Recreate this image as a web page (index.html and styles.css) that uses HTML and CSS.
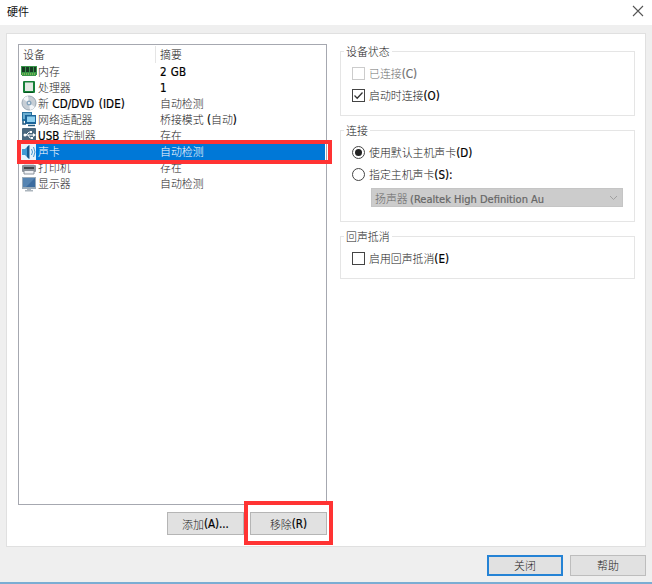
FILE: index.html
```html
<!DOCTYPE html>
<html lang="zh-CN">
<head>
<meta charset="utf-8">
<title>硬件</title>
<link rel="stylesheet" href="styles.css">
</head>
<body>
<div class="dialog">
  <header class="titlebar">
    <span class="title">硬件</span>
    <svg class="close" width="12" height="12" viewBox="0 0 12 12"><path d="M1 1l10 10M11 1L1 11" stroke="#555" stroke-width="1.1"/></svg>
  </header>
  <main class="panel">
    <section class="left">
      <div class="list">
        <div class="row head"><span class="name">设备</span><span class="value">摘要</span></div>
        <div class="row"><svg class="icon" viewBox="0 0 16 16"><path d="M0 3h16v9h-1v1H1v-1H0z" fill="#39964a"/><path d="M1 4h3v5H1zM5 4h3v5H5zM9 4h3v5H9zM13 4h2v5h-2z" fill="#173b23"/><path d="M1 11h13" stroke="#b9d45c" stroke-dasharray="1 1"/></svg><span class="name">内存</span><span class="value"><b>2 GB</b></span></div>
        <div class="row"><svg class="icon" viewBox="0 0 16 16"><rect x="2" y="2" width="12" height="12" rx="1" fill="#168038"/><rect x="4" y="3.5" width="8" height="8.5" fill="#e4e9e4"/><path d="M3 13.5h9" stroke="#075522"/></svg><span class="name">处理器</span><span class="value"><b>1</b></span></div>
        <div class="row"><svg class="icon" viewBox="0 0 16 16"><circle cx="8" cy="8" r="7" fill="#c7ced5" stroke="#9ba8b4"/><path d="M8 8L2 4a7 7 0 0 1 5-3zM8 8l6 4a7 7 0 0 1-5 3z" fill="#f4f6f9"/><circle cx="8" cy="8" r="2.500" fill="#87a5bd"/><circle cx="8" cy="8" r="1" fill="#fff"/></svg><span class="name">新 <b>CD/DVD (IDE)</b></span><span class="value">自动检测</span></div>
        <div class="row"><svg class="icon" viewBox="0 0 16 16"><path d="M1 1h10v3H5v6H1z" fill="#28719e"/><path d="M2 2h8v2H4v4H2z" fill="#6caed1"/><path d="M4 4h11v9H4z" fill="#1c659a"/><path d="M6 5.500h8v5.500H6z" fill="#8fd0ef"/><path d="M2 10v3h3M7 14.500h7" fill="none" stroke="#245a80" stroke-width="1.500"/></svg><span class="name">网络适配器</span><span class="value">桥接模式 <b>(</b>自动<b>)</b></span></div>
        <div class="row"><svg class="icon" viewBox="0 0 16 16"><rect x="1" y="1" width="14" height="14" rx="1" fill="#49677e"/><path d="M3 8h10M5 8l3-3h2M7 8l2 3h2" stroke="#fff" fill="none"/><circle cx="4" cy="8" r="1.500" fill="#fff"/><path d="M12 6l3 2-3 2zM9 4h2v2H9zM10 10h2v2h-2z" fill="#fff"/></svg><span class="name"><b>USB</b> 控制器</span><span class="value">存在</span></div>
        <div class="row selected"><svg class="icon" viewBox="0 0 16 16"><path fill="#e8f3fb" d="M0 0h15v16H0z"/><path d="M1 5h3l4-4v14l-4-4H1z" fill="#3f9ad4"/><path d="M6 3v10l2.500 2V1z" fill="#15598f"/><path d="M10.500 5q2 3 0 6M12.500 3q3 5 0 10" stroke="#4498d0" fill="none"/></svg><span class="name">声卡</span><span class="value">自动检测</span></div>
        <div class="row"><svg class="icon" viewBox="0 0 16 16"><path d="M3 2h10v4H3z" fill="#d8dde3"/><rect x="1" y="5" width="14" height="7" rx="1" fill="#8b939c"/><path d="M3 8h10" stroke="#40464d" stroke-width="2"/><path d="M3 10.500h10v3.500H3z" fill="#f0f2f5" stroke="#8a929b"/></svg><span class="name">打印机</span><span class="value">存在</span></div>
        <div class="row"><svg class="icon" viewBox="0 0 16 16"><rect x="1" y="1" width="14" height="12" fill="#9aabb9"/><path d="M2 2h12v9H2z" fill="#3c6c9f"/><path d="M2 2h12l-9 9H2z" fill="#5584b2"/><path d="M6 13h4v1H6zM4 14h8v1.500H4z" fill="#acb5bd"/></svg><span class="name">显示器</span><span class="value">自动检测</span></div>
        <div class="mark-row"></div>
      </div>
      <div class="actions">
        <div class="button">添加<b>(A)...</b></div>
        <div class="button marked">移除<b>(R)</b></div>
      </div>
    </section>
    <section class="right">
      <div class="group status"><span class="legend">设备状态</span>
        <div class="option disabled"><span class="box"></span>已连接<b>(C)</b></div>
        <div class="option"><span class="box"><svg width="11" height="11" viewBox="0 0 11 11"><path d="M1.500 5.500l2.700 2.700 5.300-5.700" fill="none" stroke="#333" stroke-width="1.300"/></svg></span>启动时连接<b>(O)</b></div>
      </div>
      <div class="group link"><span class="legend">连接</span>
        <div class="option"><span class="box radio on"></span>使用默认主机声卡<b>(D)</b></div>
        <div class="option"><span class="box radio"></span>指定主机声卡<b>(S):</b></div>
        <div class="select"><span>扬声器 <b>(Realtek High Definition Au</b></span><svg width="9" height="6" viewBox="0 0 9 6"><path d="M1 1l3.500 3.500L8 1" fill="none" stroke="#a0a0a0"/></svg></div>
      </div>
      <div class="group echo"><span class="legend">回声抵消</span>
        <div class="option"><span class="box"></span>启用回声抵消<b>(E)</b></div>
      </div>
    </section>
  </main>
  <footer class="footer">
    <div class="button primary">关闭</div>
    <div class="button">帮助</div>
  </footer>
</div>
</body>
</html>
```
FILE: styles.css
```css
*, *::before, *::after { box-sizing: border-box; }
body { margin: 0; }
.dialog {
  width: 652px; height: 584px; background: #efefef;
  border-bottom: 2px solid #7badd3;
  display: flex; flex-direction: column;
  font: 300 10.9px/16px "Noto Sans CJK SC", sans-serif; color: #222;
  white-space: nowrap; overflow: hidden;
}
b { font: 400 11.5px/10px "DejaVu Sans Condensed", "DejaVu Sans", sans-serif; font-stretch: condensed; color: #000; -webkit-text-stroke: .2px; }
.titlebar { flex: none; height: 25px; background: #fff; display: flex; justify-content: space-between; padding: 5px 8px 0 7px; }
.title { font-size: 11px; line-height: 13px; font-weight: 400; color: #111; }
.close { display: block; }
.panel { flex: none; margin: 8px 6px 0; height: 514px; background: #fff; border: 1px solid #e0e0e0; display: flex; padding: 10px 10px 0 11px; }
.left { width: 309px; margin-right: 13px; }
.list { position: relative; height: 461px; border: 1px solid #a6a8b0; padding-top: 1px; }
.row { display: flex; align-items: center; height: 16.1px; padding-left: 2px; }
.head { padding-left: 4px; height: 17px; }
.icon { width: 16px; height: 16px; flex: none; margin-right: 1px; }
.name { width: 122px; }
.name, .value { word-spacing: 1px; }
.name b { letter-spacing: .1px; }
.row .name, .row .value { padding-bottom: 1px; }
.head .name { width: 133px; height: 17px; border-right: 1px solid #e5e5e5; }
.head .value { padding-left: 4px; }
.selected { background: #0078d7; color: #fff; margin-right: 1px; }
.mark-row { position: absolute; left: -2px; top: 95px; width: 315px; height: 24px; border: 4px solid #f33; }
.actions { display: flex; justify-content: flex-end; gap: 6px; margin-top: 7px; }
.button { position: relative; display: flex; align-items: center; justify-content: center; width: 77px; height: 23px; border: 1px solid #b5b5b5; background: #e1e1e1; }
.marked::after { content: ""; position: absolute; left: -7px; top: -12px; width: 89px; height: 44px; border: 4px solid #f33; }
.right { width: 295px; padding-top: 7px; }
.group { border: 1px solid #e5e5e5; padding: 13px 0 0 11px; margin-bottom: 14px; position: relative; }
.legend { position: absolute; left: 3px; top: -9px; padding: 0 2px; background: #fff; }
.status { height: 65px; }
.link { height: 92px; }
.echo { height: 43px; }
.option { display: flex; align-items: center; height: 16px; margin-bottom: 6px; }
.option b, .button b { padding-top: 1px; }
.box { display: flex; width: 13px; height: 13px; border: 1px solid #444; margin-right: 4px; background: #fff; flex: none; }
.radio { border-radius: 50%; align-items: center; justify-content: center; }
.on::after { content: ""; width: 7px; height: 7px; border-radius: 50%; background: #222; }
.disabled, .disabled b { color: #707070; }
.disabled .box { border-color: #ccc; }
.select { display: flex; align-items: center; justify-content: space-between; width: 252px; height: 19px; margin: 1px 0 0 19px; padding: 0 4px 0 3px; background: #ccc; border: 1px solid #c5c5c5; color: #666; }
.select b { color: #666; font-size: 11px; }
.footer { display: flex; justify-content: flex-end; gap: 7px; padding: 8px 6px 0; }
.footer .button { height: 21px; width: 76px; padding-bottom: 2px; border-color: #bdbdbd; }
.footer .primary { border: 2px solid #2583d5; }
```
